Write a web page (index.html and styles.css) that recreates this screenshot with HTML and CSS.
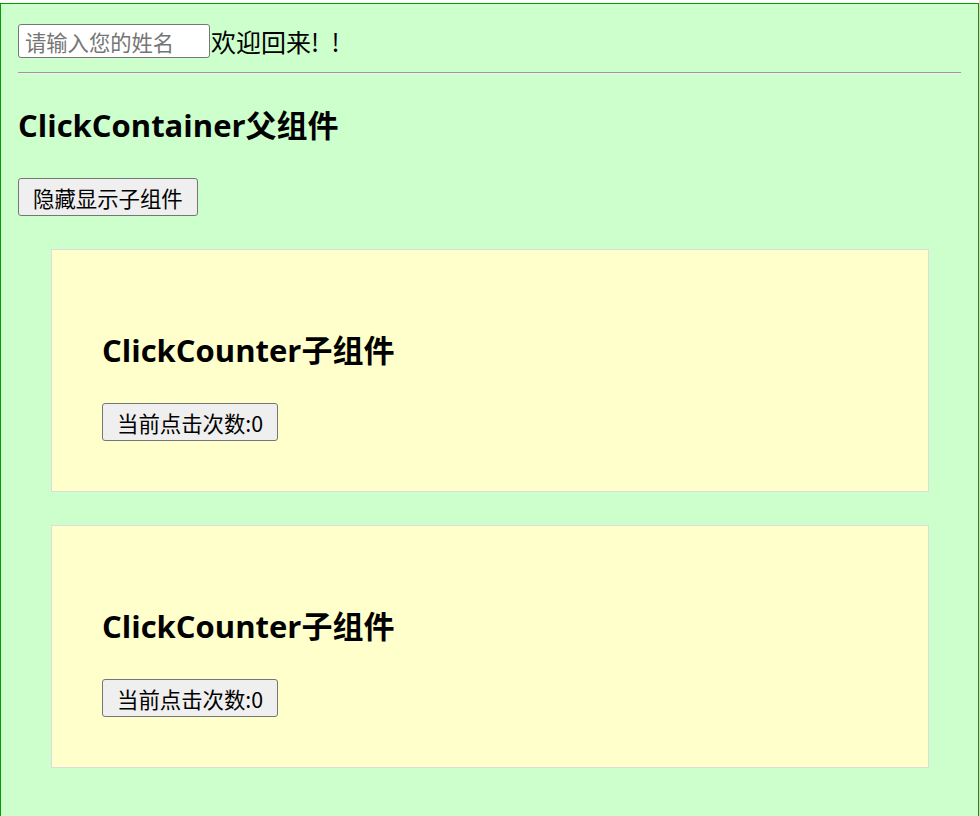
FILE: index.html
```html
<!DOCTYPE html>
<html lang="zh">
<head>
<meta charset="utf-8">
<title>ClickContainer</title>
<link rel="stylesheet" href="styles.css">
</head>
<body>
<div class="app">
  <div class="top-row">
    <input class="name-input" type="text" placeholder="请输入您的姓名">
    <span class="welcome">欢迎回来!&ensp;!</span>
  </div>
  <hr class="divider">
  <h2 class="title">ClickContainer父组件</h2>
  <button class="btn main-btn">隐藏显示子组件</button>
  <div class="counter-box">
    <h2 class="title inner-title">ClickCounter子组件</h2>
    <button class="btn">当前点击次数:0</button>
  </div>
  <div class="counter-box">
    <h2 class="title inner-title">ClickCounter子组件</h2>
    <button class="btn">当前点击次数:0</button>
  </div>
</div>
</body>
</html>
```
FILE: styles.css
```css
html, body {
  margin: 0;
  padding: 0;
  background: #ffffff;
}
body {
  font-family: "Open Sans", "Noto Sans CJK SC", sans-serif;
  color: #000;
}
.app {
  margin-top: 3px;
  border: 1px solid #00a000;
  border-bottom: none;
  background: #ccffcc;
  padding: 20px 17px 60px 17px;
  min-height: 800px;
  display: flex;
  flex-direction: column;
  align-items: flex-start;
}
.top-row {
  display: flex;
  align-items: center;
  height: 34px;
}
.name-input {
  box-sizing: border-box;
  width: 192px;
  height: 34px;
  margin: 0;
  padding: 0 6px;
  border: 1px solid #767676;
  border-radius: 3px;
  font-family: "Noto Sans CJK SC", sans-serif;
  font-size: 21.3px;
  background: #fff;
}
.name-input::placeholder {
  color: #757575;
}
.welcome {
  font-family: "Noto Sans CJK SC", sans-serif;
  font-size: 25px;
  line-height: 34px;
  padding-left: 1px;
}
.divider {
  align-self: stretch;
  margin: 14px 0 0 0;
  height: 0;
  border: none;
  border-top: 1px solid #9a9a9a;
  border-bottom: 1px solid #eaf5ea;
}
.title {
  margin: 30px 0 0 0;
  font-size: 31px;
  line-height: 42px;
  font-weight: 700;
}
.btn {
  box-sizing: border-box;
  margin: 32px 0 0 0;
  height: 38px;
  padding: 0 14px;
  border: 1px solid #767676;
  border-radius: 3px;
  background: #efefef;
  font-family: "Noto Sans CJK SC", sans-serif;
  font-size: 21.4px;
  color: #000;
}
.counter-box {
  box-sizing: border-box;
  align-self: stretch;
  margin: 33px 32px 0 33px;
  padding: 50px 50px 50px 50px;
  border: 1px solid #dcdcdc;
  background: #ffffcc;
  display: flex;
  flex-direction: column;
  align-items: flex-start;
}
.inner-title {
  margin-top: 29px;
}
```
